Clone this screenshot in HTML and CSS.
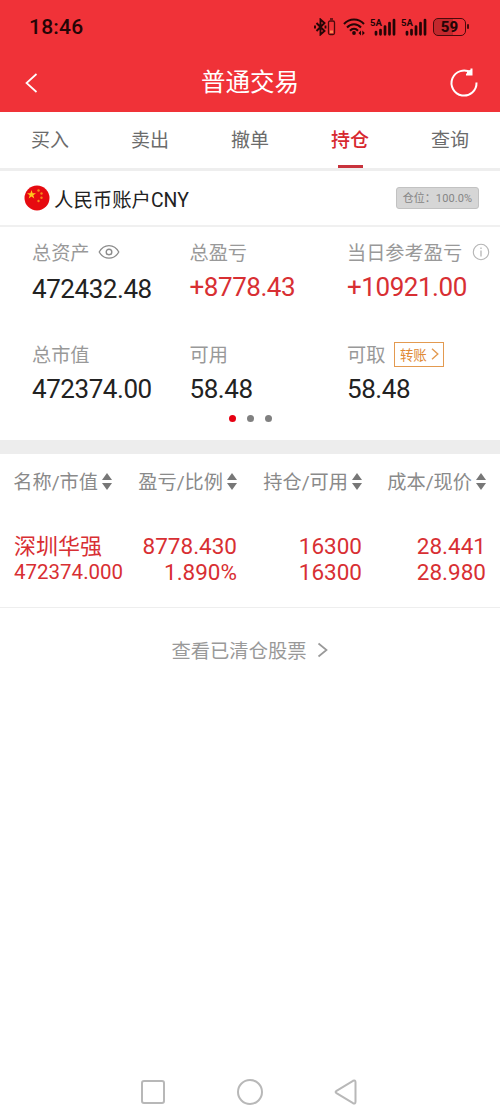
FILE: index.html
```html
<!DOCTYPE html>
<html lang="zh-CN">
<head>
  <meta charset="UTF-8">
  <title>普通交易</title>
  <link rel="stylesheet" href="styles.css">
</head>
<body>
  <header class="top">
    <div class="status-bar">
      <span class="clock">18:46</span>
      <div class="status-icons">
        <svg class="bluetooth" width="22" height="18" viewBox="0 0 22 18">
          <path d="M2.500 5l8 8-4 3.500V1.500l4 3.500-8 8M1 7.500v3M11.500 7.500v3" fill="none" stroke="#240506" stroke-width="1.900"/>
          <rect x="14.500" y="3" width="6" height="13.500" rx="1.500" fill="none" stroke="#4a0a0c" stroke-width="1.300"/>
          <path d="M16 1h3" stroke="#4a0a0c" stroke-width="1.500"/>
          <path d="M16 13.800h3" stroke="#ff8a50" stroke-width="2.500"/>
        </svg>
        <svg class="wifi" width="22" height="18" viewBox="0 0 22 18">
          <g fill="none" stroke="#240506" stroke-width="2">
            <path d="M1 6C6.500.1 15.500.1 21 6"/>
            <path d="M4 9.500c4-4.300 10-4.300 14 0"/>
            <path d="M7 12.700c2.300-2.500 5.700-2.500 8 0"/>
          </g>
          <circle cx="11" cy="15" r="1.900" fill="#240506"/>
          <path d="M18 12.500v5l-2.500-2.500zM19.300 12.500v5l2.500-2.500z" fill="#240506"/>
        </svg>
        <div class="signal">
          <span>5A</span>
          <svg width="25" height="18" viewBox="0 0 25 18">
            <path d="M5 14v2.300M9.500 12v4.300M14 8.500v7.800M18.500 5v11.300M23 2v14.300" stroke="#240506" stroke-width="2.700" stroke-linecap="round"/>
          </svg>
        </div>
        <div class="signal">
          <span>5A</span>
          <svg width="25" height="18" viewBox="0 0 25 18">
            <path d="M5 14v2.300M9.500 12v4.300M14 8.500v7.800M18.500 5v11.300M23 2v14.300" stroke="#240506" stroke-width="2.700" stroke-linecap="round"/>
          </svg>
        </div>
        <div class="battery"><span>59</span></div>
      </div>
    </div>
    <div class="title-bar">
      <svg class="back" width="14" height="22" viewBox="0 0 14 22">
        <path d="M11.500 2L1.500 11l10 9" fill="none" stroke="#fff" stroke-width="1.700"/>
      </svg>
      <h1>普通交易</h1>
      <svg class="refresh" width="30" height="30" viewBox="0 0 30 30">
        <path d="M27.500 14.500a12.500 12.500 0 1 1-5.500-9.800" fill="none" stroke="#fff" stroke-width="2"/>
        <path d="M22.500.5v6h-5.500" fill="none" stroke="#fff" stroke-width="2"/>
        <path d="M18 3l4.500-1.500v5H18z" fill="#fff"/>
      </svg>
    </div>
  </header>

  <nav class="tabs">
    <a>买入</a>
    <a>卖出</a>
    <a>撤单</a>
    <a class="active">持仓</a>
    <a>查询</a>
  </nav>

  <section class="account">
    <svg class="flag" width="26" height="26" viewBox="0 0 26 26">
      <circle cx="13" cy="13" r="12.500" fill="#e60a10"/>
      <path d="M7.500 5l1.100 3.200H12L9.300 10.200l1 3.200-2.800-2-2.800 2 1-3.200L3 8.200h3.400z" fill="#ffc61e"/>
      <g fill="#f58a1a">
        <circle cx="14.500" cy="5.500" r="1.200"/>
        <circle cx="17.500" cy="8.500" r="1.200"/>
        <circle cx="17.500" cy="12.800" r="1.200"/>
        <circle cx="14.500" cy="16" r="1.200"/>
      </g>
    </svg>
    <span class="account-name">人民币账户CNY</span>
    <span class="position-tag">仓位：<b>100.0%</b></span>
  </section>

  <section class="summary">
    <div class="item">
      <div class="label">总资产
        <svg class="eye" width="22" height="16" viewBox="0 0 22 16">
          <path d="M1.200 8C5.800-.6 16.200-.6 20.800 8 16.200 16.200 5.800 16.200 1.200 8z" fill="none" stroke="#8c8c8c" stroke-width="1.300"/>
          <circle cx="11" cy="8" r="2.800" fill="none" stroke="#8c8c8c" stroke-width="1.400"/>
        </svg>
      </div>
      <div class="value low">472432.48</div>
    </div>
    <div class="item">
      <div class="label">总盈亏</div>
      <div class="value red">+8778.43</div>
    </div>
    <div class="item">
      <div class="label">当日参考盈亏
        <svg class="info" width="18" height="18" viewBox="0 0 18 18">
          <circle cx="9" cy="9" r="7.700" fill="none" stroke="#b5b5b5" stroke-width="1.100"/>
          <path d="M9 4.500v1.600M9 7.500v6" stroke="#b5b5b5" stroke-width="1.300"/>
        </svg>
      </div>
      <div class="value red">+10921.00</div>
    </div>
    <div class="item">
      <div class="label">总市值</div>
      <div class="value">472374.00</div>
    </div>
    <div class="item">
      <div class="label">可用</div>
      <div class="value">58.48</div>
    </div>
    <div class="item">
      <div class="label">可取
        <span class="transfer">转账
          <svg width="8" height="12" viewBox="0 0 8 12"><path d="M1 .8L6.800 6 1 11.200" fill="none" stroke="#e39a50" stroke-width="1.400"/></svg>
        </span>
      </div>
      <div class="value">58.48</div>
    </div>
  </section>
  <div class="dots">
    <i class="on"></i>
    <i></i>
    <i></i>
  </div>

  <section class="holdings">
    <div class="row head">
      <div>名称/市值<i class="sort"></i></div>
      <div>盈亏/比例<i class="sort"></i></div>
      <div>持仓/可用<i class="sort"></i></div>
      <div>成本/现价<i class="sort"></i></div>
    </div>
    <div class="row stock">
      <div><p class="name">深圳华强</p><p class="market">472374.000</p></div>
      <div><p>8778.430</p><p>1.890%</p></div>
      <div><p>16300</p><p>16300</p></div>
      <div><p>28.441</p><p>28.980</p></div>
    </div>
  </section>

  <a class="cleared">查看已清仓股票
    <svg width="11" height="16" viewBox="0 0 11 16"><path d="M1.500 1.500L9.500 8l-8 6.500" fill="none" stroke="#999" stroke-width="1.700"/></svg>
  </a>

  <footer class="nav-keys">
    <svg width="26" height="28" viewBox="0 0 26 28"><rect x="2" y="3" width="22" height="22" rx="2" fill="none" stroke="#b8b8b8" stroke-width="2"/></svg>
    <svg width="28" height="28" viewBox="0 0 28 28"><circle cx="14" cy="14" r="12" fill="none" stroke="#b8b8b8" stroke-width="2"/></svg>
    <svg width="26" height="28" viewBox="0 0 26 28"><path d="M3.500 12.800L20 2.800q2.500-1 2.500 1.500v19.400q0 2.500-2.500 1.500L3.500 15.200q-1.800-1.200 0-2.400z" fill="none" stroke="#b8b8b8" stroke-width="2"/></svg>
  </footer>
</body>
</html>
```
FILE: styles.css
```css
* {
  box-sizing: border-box;
}

body {
  margin: 0;
  height: 1113px;
  display: flex;
  flex-direction: column;
  background-color: #fff;
  font-family: Roboto, "Noto Sans CJK SC", sans-serif;
  color: #222;
}

p, h1 {
  margin: 0;
}

svg {
  display: block;
  flex: none;
}

.top {
  height: 112px;
  background-color: #f03238;
}

.status-bar {
  height: 53px;
  padding: 0 34px 0 29px;
  display: flex;
  align-items: center;
  justify-content: space-between;
  color: #240506;
}

.clock {
  font-size: 21px;
  font-weight: 500;
  letter-spacing: 0.2px;
}

.status-icons {
  display: flex;
  align-items: center;
}

.wifi {
  margin-left: 7px;
}

.signal {
  position: relative;
  margin-left: 6px;
}

.signal span {
  position: absolute;
  left: -1px;
  top: -1px;
  font-size: 9.5px;
  line-height: 11px;
  font-weight: 700;
}

.battery {
  position: relative;
  width: 33px;
  height: 18px;
  margin-left: 6px;
  border: 1.5px solid #4a0a0c;
  border-radius: 5px;
  background: linear-gradient(90deg, #c3282d 62%, #f03238 62%);
  font-size: 15px;
  line-height: 16px;
  font-weight: 800;
  text-align: center;
}

.battery::after {
  content: "";
  position: absolute;
  right: -4px;
  top: 5px;
  width: 2px;
  height: 5px;
  border-radius: 1px;
  background-color: #4a0a0c;
}

.title-bar {
  height: 59px;
  padding: 0 21px 0 25px;
  display: flex;
  align-items: center;
  justify-content: space-between;
}

.title-bar h1 {
  margin-left: 12px;
  font-size: 24.5px;
  line-height: 36px;
  font-weight: 400;
  color: #fff;
}

.tabs {
  height: 59px;
  display: flex;
  border-bottom: 3px solid #eee;
}

.tabs a {
  flex: 1;
  height: 56px;
  display: flex;
  flex-direction: column;
  align-items: center;
  font-size: 19px;
  line-height: 57px;
  color: #6b6b6b;
}

.tabs .active {
  color: #d7282f;
  font-weight: 500;
}

.tabs .active::after {
  content: "";
  width: 25px;
  height: 3px;
  margin-top: -4px;
  background-color: #c8323c;
}

.account {
  height: 56px;
  padding: 0 21px 0 24px;
  display: flex;
  align-items: center;
  border-bottom: 2px solid #f0f0f0;
}

.account-name {
  margin-left: 4px;
  font-size: 19.4px;
}

.position-tag {
  width: 83px;
  height: 22px;
  margin-left: auto;
  border: 1px solid #c2c2c2;
  border-radius: 3px;
  background-color: #d6d6d6;
  font-size: 11px;
  line-height: 21px;
  text-align: center;
  white-space: nowrap;
  color: #858585;
}

.position-tag b {
  font-weight: 400;
  letter-spacing: 0.1px;
}

.summary {
  height: 180px;
  padding: 11px 0 0 32px;
  display: grid;
  grid-template-columns: 157.5px 157.5px 1fr;
  grid-template-rows: 102px 66px;
}

.label {
  height: 28px;
  display: flex;
  align-items: center;
  font-size: 19.2px;
  white-space: nowrap;
  color: #999;
}

.eye {
  margin-left: 8px;
}

.info {
  margin-left: 10px;
}

.value {
  margin-top: 5px;
  font-size: 26px;
  line-height: 32px;
  letter-spacing: -0.45px;
}

.value.low {
  margin-top: 7px;
}

.red {
  color: #d82f33;
}

.transfer {
  width: 50px;
  height: 25px;
  margin-left: 9px;
  border: 1.5px solid #e39a50;
  display: flex;
  align-items: center;
  justify-content: center;
  gap: 4px;
  font-size: 13.5px;
  color: #e08a35;
}

.dots {
  height: 33px;
  padding-top: 8px;
  display: flex;
  justify-content: center;
  gap: 11px;
}

.dots i {
  width: 7px;
  height: 7px;
  border-radius: 50%;
  background-color: #808080;
}

.dots .on {
  background-color: #e60012;
}

.holdings {
  height: 168px;
  border-top: 14px solid #ededed;
  border-bottom: 1px solid #eee;
}

.row {
  padding: 0 14px;
  display: grid;
  grid-template-columns: 98px 125px 125px 124px;
}

.head {
  height: 54px;
  align-items: center;
  font-size: 19.2px;
  color: #8a8a8a;
}

.head div {
  display: flex;
  align-items: center;
  justify-content: flex-end;
  white-space: nowrap;
}

.sort {
  margin-left: 4px;
  display: flex;
  flex-direction: column;
  gap: 3px;
}

.sort::before,
.sort::after {
  content: "";
  border: 5px solid transparent;
}

.sort::before {
  border-top: 0;
  border-bottom: 7px solid #777;
}

.sort::after {
  border-bottom: 0;
  border-top: 7px solid #777;
}

.stock {
  padding-top: 25px;
  font-size: 22.5px;
  line-height: 26px;
  text-align: right;
  color: #d82f33;
}

.stock p {
  height: 26px;
  white-space: nowrap;
}

.stock div:first-child {
  text-align: left;
}

.stock .name {
  font-size: 22px;
  line-height: 28px;
}

.stock .market {
  font-size: 20.5px;
}

.cleared {
  height: 83px;
  display: flex;
  align-items: center;
  justify-content: center;
  gap: 11px;
  font-size: 19.3px;
  color: #999;
}

.nav-keys {
  height: 42px;
  margin-top: auto;
  padding: 0 141px 0 140px;
  display: flex;
  align-items: center;
  justify-content: space-between;
}
```
